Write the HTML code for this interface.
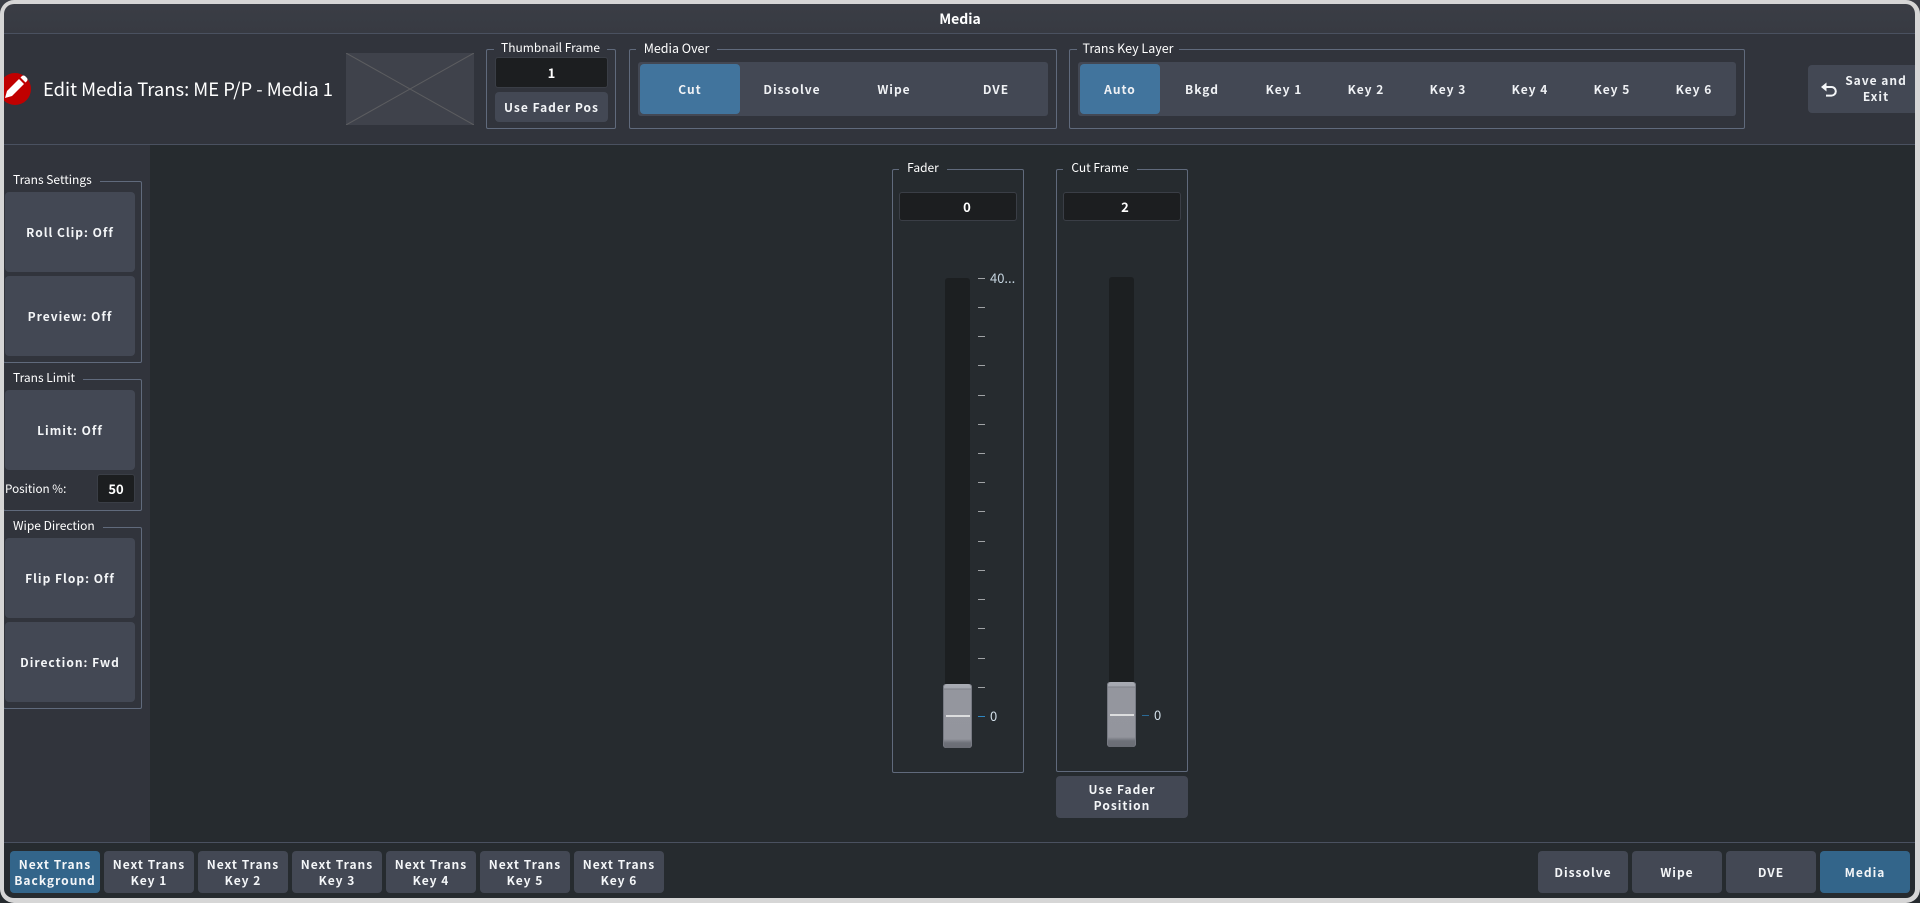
<!DOCTYPE html>
<html><head><meta charset="utf-8"><style>
*{box-sizing:border-box;margin:0;padding:0}
html,body{width:1920px;height:903px;overflow:hidden;background:#fff}
body{position:relative;font-family:"Noto Sans CJK JP","Liberation Sans",sans-serif;color:#fff}
.a{position:absolute}
.box{position:absolute;border:1px solid #606a7c;border-radius:2px}
.lg{position:absolute;font-size:12px;line-height:16px;height:16px;text-align:center;white-space:nowrap;color:#fff}
.b{position:absolute;background:#434854;border-radius:4px;display:flex;align-items:center;justify-content:center;text-align:center;font-weight:700;font-size:12px;line-height:16px;letter-spacing:1px;color:#f4f6f8;padding-top:1px}
.on{background:#33658a}
.in{position:absolute;background:#1c1e20;border:1px solid #3a3e46;border-radius:3px;display:flex;align-items:center;justify-content:center;font-weight:700;font-size:13px;color:#fff}
.t{position:absolute;transform:translateX(-50%);font-weight:700;font-size:12px;line-height:16px;letter-spacing:1px;white-space:nowrap;color:#f0f2f5;top:81.500px}
.tick{position:absolute;width:7px;height:1px;background:#a0a3a6}
.track{position:absolute;background:#1c1f21;border-radius:3px 3px 0 0}
.handle{position:absolute;width:29px;border-radius:3px;background:linear-gradient(#a9acb4 0,#a4a7af 4px,#7f828a 5px,#94969e 6px,#93959d 55px,#7f828a 57px,#6d7078 59px,#6a6d75 100%);box-shadow:inset 1px 0 0 #777a83,inset -1px 0 0 #777a83}
.handle i{position:absolute;left:3px;right:2px;height:2px;background:#dcddde}
</style></head><body>
<div class="a" style="left:0;top:0;width:1920px;height:903px;background:#262b2f"></div>
<div class="a" style="left:0;top:0;width:1920px;height:33px;background:linear-gradient(#3b3e46,#373a42)"></div>
<div class="a" style="left:0;top:33px;width:1920px;height:1px;background:#4a5160"></div>
<div class="a" style="left:0;top:34px;width:1920px;height:110px;background:#31343c"></div>
<div class="a" style="left:0;top:144px;width:1920px;height:1px;background:#4a5160"></div>
<div class="a" style="left:0;top:145px;width:150px;height:697px;background:#31343c"></div>
<div class="a" style="left:0;top:842px;width:1920px;height:1px;background:#4a5160"></div>
<div class="a" style="left:0;top:11px;width:1920px;text-align:center;font-weight:700;font-size:14px;line-height:17px">Media</div>

<svg class="a" style="left:0;top:70px" width="36" height="38" viewBox="0 0 36 38">
<circle cx="15" cy="19" r="16" fill="#c00000"/>
<path d="M5 28 L7 21 L19 9 L24 14 L12 26 Z" fill="#fff"/>
<path d="M20.500 7.500 L22 6 Q23.500 5 25 6 L27 8 Q28 9.500 27 11 L25.500 12.500 Z" fill="#fff"/>
</svg>
<div class="a" style="left:43px;top:76px;width:300px;font-size:18.400px;line-height:26px;white-space:nowrap" id="title">Edit Media Trans: ME P/P - Media 1</div>

<svg class="a" style="left:346px;top:53px" width="128" height="72"><rect width="128" height="72" fill="#3f424b"/><path d="M0 0L128 72M128 0L0 72" stroke="#5c5d60" stroke-width="1"/></svg>

<div class="box" style="left:486px;top:49px;width:130px;height:80px"></div>
<div class="lg" style="left:494px;top:40px;width:113px;background:#31343c">Thumbnail Frame</div>
<div class="in" style="left:495px;top:57px;width:113px;height:31px">1</div>
<div class="b" style="left:495px;top:92px;width:113px;height:30px">Use Fader Pos</div>

<div class="box" style="left:629px;top:49px;width:428px;height:80px"></div>
<div class="lg" style="left:636px;top:40px;width:81px;background:#31343c;font-size:12.500px">Media Over</div>
<div class="a" style="left:638px;top:62px;width:410px;height:54px;background:#434854;border-radius:3px"></div>
<div class="a" style="left:640px;top:64px;width:100px;height:50px;background:#41749d;border-radius:4px"></div>
<div class="t" style="left:690px">Cut</div><div class="t" style="left:792px">Dissolve</div><div class="t" style="left:894px">Wipe</div><div class="t" style="left:996px">DVE</div>

<div class="box" style="left:1069px;top:49px;width:676px;height:80px"></div>
<div class="lg" style="left:1077px;top:40px;width:102px;background:#31343c;font-size:12.500px">Trans Key Layer</div>
<div class="a" style="left:1078px;top:62px;width:658px;height:54px;background:#434854;border-radius:3px"></div>
<div class="a" style="left:1080px;top:64px;width:80px;height:50px;background:#41749d;border-radius:4px"></div>
<div class="t" style="left:1120px">Auto</div><div class="t" style="left:1202px">Bkgd</div><div class="t" style="left:1284px">Key 1</div><div class="t" style="left:1366px">Key 2</div><div class="t" style="left:1448px">Key 3</div><div class="t" style="left:1530px">Key 4</div><div class="t" style="left:1612px">Key 5</div><div class="t" style="left:1694px">Key 6</div>

<div class="a" style="left:1808px;top:65px;width:112px;height:48px;background:#434854;border-radius:4px"></div>
<svg class="a" style="left:1820px;top:81px" width="18" height="18" viewBox="0 0 18 18" fill="none" stroke="#f4f6f8" stroke-width="2"><path d="M4 6H11.500a4.300 4.300 0 0 1 0 8.600H6"/><path d="M1 6L6.500 1.500V10.500Z" fill="#f4f6f8" stroke="none"/></svg>
<div class="a" style="left:1840px;top:73px;width:72px;text-align:center;font-weight:700;font-size:12px;line-height:16px;letter-spacing:1px;color:#f0f2f5">Save and Exit</div>

<!-- left panel -->
<div class="box" style="left:3px;top:181px;width:139px;height:182px"></div>
<div class="lg" style="left:4px;top:172px;width:96px;padding-left:9px;text-align:left;background:#31343c">Trans Settings</div>
<div class="b" style="left:5px;top:192px;width:130px;height:80px">Roll Clip: Off</div>
<div class="b" style="left:5px;top:276px;width:130px;height:80px">Preview: Off</div>
<div class="box" style="left:3px;top:379px;width:139px;height:132px"></div>
<div class="lg" style="left:4px;top:370px;width:79px;padding-left:9px;text-align:left;background:#31343c">Trans Limit</div>
<div class="b" style="left:5px;top:390px;width:130px;height:80px">Limit: Off</div>
<div class="a" style="left:5px;top:481px;font-size:11.700px;line-height:16px;white-space:nowrap">Position %:</div>
<div class="in" style="left:97px;top:474px;width:38px;height:29px">50</div>
<div class="box" style="left:3px;top:527px;width:139px;height:182px"></div>
<div class="lg" style="left:4px;top:518px;width:99px;padding-left:9px;text-align:left;background:#31343c">Wipe Direction</div>
<div class="b" style="left:5px;top:538px;width:130px;height:80px">Flip Flop: Off</div>
<div class="b" style="left:5px;top:622px;width:130px;height:80px">Direction: Fwd</div>

<!-- fader -->
<div class="box" style="left:892px;top:169px;width:132px;height:604px"></div>
<div class="lg" style="left:899px;top:160px;width:48px;background:#262b2f">Fader</div>
<div class="in" style="left:899px;top:192px;width:118px;height:29px;padding-left:18px">0</div>
<div class="track" style="left:945px;top:278px;width:25px;height:410px"></div>
<div class="tick" style="left:978px;top:278px"></div><div class="tick" style="left:978px;top:307px"></div><div class="tick" style="left:978px;top:336px"></div><div class="tick" style="left:978px;top:365px"></div><div class="tick" style="left:978px;top:395px"></div><div class="tick" style="left:978px;top:424px"></div><div class="tick" style="left:978px;top:453px"></div><div class="tick" style="left:978px;top:482px"></div><div class="tick" style="left:978px;top:511px"></div><div class="tick" style="left:978px;top:541px"></div><div class="tick" style="left:978px;top:570px"></div><div class="tick" style="left:978px;top:599px"></div><div class="tick" style="left:978px;top:628px"></div><div class="tick" style="left:978px;top:658px"></div><div class="tick" style="left:978px;top:687px"></div><div class="tick" style="left:978px;top:716px;background:#2f86c0"></div>
<div class="a" style="left:990px;top:270px;font-size:13px;line-height:16px;color:#c4d3de;white-space:nowrap">40...</div>
<div class="a" style="left:990px;top:708px;font-size:13px;line-height:16px;color:#d2dfe8">0</div>
<div class="handle" style="left:943px;top:684px;height:64px"><i style="top:31px"></i></div>

<!-- cut frame -->
<div class="box" style="left:1056px;top:169px;width:132px;height:603px"></div>
<div class="lg" style="left:1063px;top:160px;width:74px;background:#262b2f">Cut Frame</div>
<div class="in" style="left:1063px;top:192px;width:118px;height:29px;padding-left:6px">2</div>
<div class="track" style="left:1109px;top:277px;width:25px;height:410px"></div>
<div class="tick" style="left:1142px;top:715px;background:#2a6a96"></div>
<div class="a" style="left:1154px;top:707px;font-size:13px;line-height:16px;color:#d2dfe8">0</div>
<div class="handle" style="left:1107px;top:682px;height:65px"><i style="top:32px"></i></div>
<div class="b" style="left:1056px;top:776px;width:132px;height:42px;padding:1px 20px 0">Use Fader Position</div>

<!-- bottom -->
<div class="b on" style="left:10px;top:851px;width:90px;height:42px">Next Trans Background</div>
<div class="b" style="left:104px;top:851px;width:90px;height:42px">Next Trans Key 1</div>
<div class="b" style="left:198px;top:851px;width:90px;height:42px">Next Trans Key 2</div>
<div class="b" style="left:292px;top:851px;width:90px;height:42px">Next Trans Key 3</div>
<div class="b" style="left:386px;top:851px;width:90px;height:42px">Next Trans Key 4</div>
<div class="b" style="left:480px;top:851px;width:90px;height:42px">Next Trans Key 5</div>
<div class="b" style="left:574px;top:851px;width:90px;height:42px">Next Trans Key 6</div>
<div class="b" style="left:1538px;top:851px;width:90px;height:42px">Dissolve</div>
<div class="b" style="left:1632px;top:851px;width:90px;height:42px">Wipe</div>
<div class="b" style="left:1726px;top:851px;width:90px;height:42px">DVE</div>
<div class="b on" style="left:1820px;top:851px;width:90px;height:42px">Media</div>

<div class="a" style="left:0;top:0;width:1920px;height:903px;border-style:solid;border-color:#d6d6d6;border-width:4px 5px 5px 4px;border-radius:14px"></div>
</body></html>
